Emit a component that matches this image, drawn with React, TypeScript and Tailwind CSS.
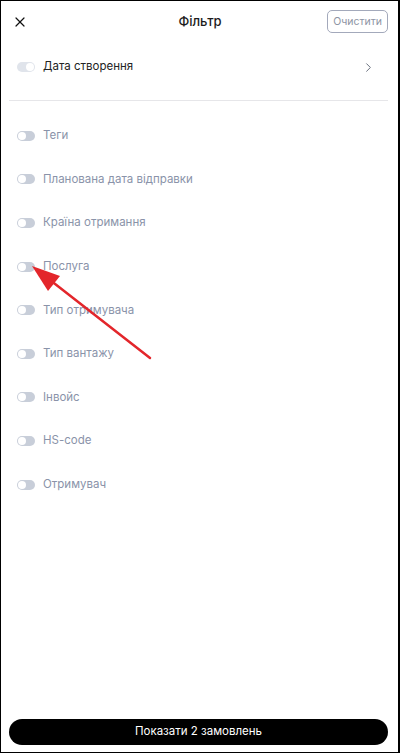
import { X, ChevronRight } from "lucide-react";

const filters = [
  "Теги",
  "Планована дата відправки",
  "Країна отримання",
  "Послуга",
  "Тип отримувача",
  "Тип вантажу",
  "Інвойс",
  "HS-code",
  "Отримувач",
];

function Toggle({ on = false }: { on?: boolean }) {
  return (
    <span
      className={`flex h-[10px] w-[18px] shrink-0 items-center rounded-full px-[1px] ${
        on ? "justify-end bg-[#e0e4eb]" : "justify-start bg-[#c8ced9]"
      }`}
    >
      <span className="h-[8px] w-[8px] rounded-full bg-white" />
    </span>
  );
}

export default function App() {
  return (
    <div
      className="relative flex h-[753px] w-[400px] flex-col border border-r-2 border-black bg-white"
      style={{ fontFamily: "Inter, 'Noto Sans', sans-serif" }}
    >
      {/* header */}
      <header className="grid h-[41px] grid-cols-[1fr_auto_1fr] items-center pl-[11px] pr-[10px]">
        <button className="justify-self-start text-[#111]">
          <X size={16} strokeWidth={1.8} />
        </button>
        <h1 className="text-[13px] font-medium text-[#1c1c1c]">Фільтр</h1>
        <button className="justify-self-end rounded-[5px] border border-[#a3a9bb] px-[5px] py-[4px] text-[10.5px] leading-[13px] text-[#8e94a4]">
          Очистити
        </button>
      </header>

      {/* date row */}
      <div className="flex h-[50px] items-center pl-[16px] pr-[22px]">
        <Toggle on />
        <span className="ml-[8px] text-[11.5px] text-[#232323]">Дата створення</span>
        <ChevronRight size={15} strokeWidth={1.4} className="ml-auto text-[#555b6c]" />
      </div>

      <div className="ml-2 mr-[10px] mt-[8px] h-px bg-[#e6e6e9]" />

      {/* filters list */}
      <ul className="pt-[13px] pl-[16px]">
        {filters.map((f) => (
          <li key={f} className="flex h-[43.6px] items-center">
            <Toggle />
            <span className="ml-[8px] text-[11.5px] text-[#8a93a9]">{f}</span>
          </li>
        ))}
      </ul>

      {/* footer */}
      <div className="mt-auto mb-[7px] ml-2 mr-[10px]">
        <button className="flex h-[26px] w-full items-center justify-center rounded-full bg-black text-[11.5px] text-white">
          Показати 2 замовлень
        </button>
      </div>

      {/* annotation arrow */}
      <svg
        className="pointer-events-none absolute left-[-1px] top-[-1px]"
        width="400"
        height="753"
        viewBox="0 0 400 753"
      >
        <line x1="150" y1="358" x2="50" y2="280" stroke="#e3262b" strokeWidth="2.5" strokeLinecap="round" />
        <polygon points="32,266 60,276 48,291" fill="#e3262b" />
      </svg>
    </div>
  );
}
